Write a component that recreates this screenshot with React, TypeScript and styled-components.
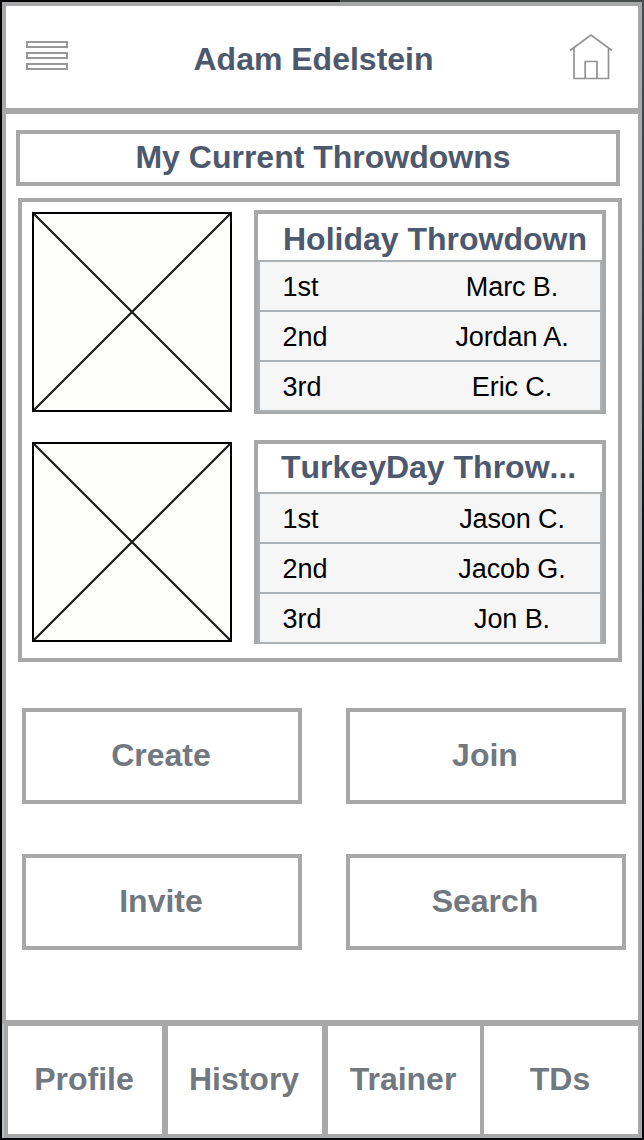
import React from "react";
import styled, { createGlobalStyle } from "styled-components";

const GREY = "#a8a8a8";
const LINE = "#abb0b4";
const NAVY = "#4d596e";
const SLATE = "#717880";

const Global = createGlobalStyle`
  * { box-sizing: border-box; }
  body { margin: 0; background: #000; font-family: "Liberation Sans", Arial, sans-serif; }
`;

const Bezel = styled.div`
  width: 644px;
  height: 1140px;
  padding: 2px;
  background:
    linear-gradient(90deg, #050608 0 340px, #4a4d4e 340px) top / 100% 2px no-repeat,
    linear-gradient(#4a4d4e, #3c3e42 240px, #101116 520px, #050608 700px) right / 2px 100% no-repeat,
    #030508;
`;

const Screen = styled.div`
  display: flex;
  flex-direction: column;
  height: 1136px;
  background: #fff;
`;

const Header = styled.header`
  display: flex;
  align-items: center;
  justify-content: space-between;
  height: 112px;
  padding: 0 25px 0 20px;
  border: 4px solid ${GREY};
  border-bottom-width: 6px;
`;

const UserName = styled.h1`
  margin: 4px 10px 0 0;
  font-size: 32px;
  line-height: 36px;
  color: ${NAVY};
`;

const MenuIcon = styled.div`
  display: flex;
  flex-direction: column;
  gap: 4px;
  margin-top: -3px;
`;

const MenuBar = styled.span`
  width: 42px;
  height: 7px;
  border: 2px solid #989898;
`;

const HomeIcon = styled.svg`
  display: block;
  width: 44px;
  height: 48px;
`;

const Main = styled.main`
  flex: 1;
  border: solid ${GREY};
  border-width: 0 4px;
  padding: 16px 12px 0 10px;
`;

const SectionTitle = styled.h2`
  width: 604px;
  height: 56px;
  margin: 0;
  border: 4px solid ${GREY};
  padding-left: 10px;
  font-size: 32px;
  line-height: 46px;
  text-align: center;
  color: ${NAVY};
`;

const Panel = styled.section`
  display: flex;
  flex-direction: column;
  gap: 26px;
  width: 604px;
  height: 464px;
  margin: 12px 0 0 2px;
  padding: 8px 10px;
  border: 4px solid ${GREY};
`;

const Entry = styled.article`
  display: flex;
  gap: 22px;
`;

const Picture = styled.svg`
  display: block;
  flex: none;
  width: 200px;
  height: 200px;
  margin-top: 2px;
`;

const Card = styled.div<{ $open: boolean }>`
  width: 352px;
  height: 204px;
  border: solid ${GREY};
  border-width: ${(p) => (p.$open ? "4px 4px 0" : "4px 4px 2px")};
`;

const CardTitle = styled.h3<{ $height: number; $shift: number }>`
  height: ${(p) => p.$height}px;
  margin: 0;
  padding-left: ${(p) => p.$shift}px;
  font-size: 32px;
  font-kerning: none;
  line-height: ${(p) => (p.$height === 46 ? 50 : 46)}px;
  white-space: nowrap;
  color: ${NAVY};
`;

const Ranking = styled.div`
  width: 344px;
  border: 2px solid ${LINE};
  border-bottom: 0;
`;

const RankRow = styled.div`
  display: grid;
  grid-template-columns: 164px 1fr;
  height: 50px;
  border-bottom: 2px solid ${LINE};
  background: #f6f6f6;
  font-size: 27px;
  line-height: 51px;
  color: #000;
`;

const Place = styled.span`
  padding-left: 22.5px;
`;

const Player = styled.span`
  text-align: center;
  letter-spacing: -0.1px;
`;

const Actions = styled.div`
  display: grid;
  grid-template-columns: 280px 280px;
  gap: 50px 44px;
  margin: 46px 0 0 6px;
`;

const Action = styled.button`
  height: 96px;
  padding: 0 2px 1px 0;
  border: 4px solid ${GREY};
  background: #fff;
  font: bold 32px "Liberation Sans", Arial, sans-serif;
  color: ${SLATE};
`;

const Nav = styled.nav`
  display: grid;
  grid-template-columns: 154px 154px 152px 152px;
  column-gap: 6px;
  height: 118px;
  padding: 6px 4px 4px 6px;
  background: linear-gradient(#b9bec8, #b9bec8) 0 4px / 2px 100% no-repeat, ${GREY};
`;

const Tab = styled.a<{ $wide?: boolean }>`
  display: flex;
  align-items: center;
  justify-content: center;
  margin-left: ${(p) => (p.$wide ? -2 : 0)}px;
  padding: 0 2px 2px 0;
  background: #fff;
  font-size: 32px;
  font-weight: bold;
  color: ${SLATE};
`;

const throwdowns = [
  { title: "Holiday Throwdown", height: 46, shift: 25, players: ["Marc B.", "Jordan A.", "Eric C."] },
  { title: "TurkeyDay Throw...", height: 48, shift: 23, players: ["Jason C.", "Jacob G.", "Jon B."] },
];
const places = ["1st", "2nd", "3rd"];

const Placeholder = () => (
  <Picture viewBox="0 0 200 200">
    <rect x="1" y="1" width="198" height="198" fill="#fefefd" stroke="#000" strokeWidth="2" />
    <path d="M2 2L198 198M198 2L2 198" stroke="#1c1c1c" strokeWidth="2.2" />
  </Picture>
);

export default function App() {
  return (
    <Bezel>
      <Global />
      <Screen>
        <Header>
          <MenuIcon>
            <MenuBar />
            <MenuBar />
            <MenuBar />
          </MenuIcon>
          <UserName>Adam Edelstein</UserName>
          <HomeIcon viewBox="0 0 44 48" fill="none" stroke="#929292" strokeWidth="1.7">
            <path d="M1 17.5L22 2L43 17.5M5 15V45.5H39.5V15M16.2 45.5V28.5H28V45.5" />
          </HomeIcon>
        </Header>
        <Main>
          <SectionTitle>My Current Throwdowns</SectionTitle>
          <Panel>
            {throwdowns.map((t, i) => (
              <Entry key={t.title}>
                <Placeholder />
                <Card $open={i === 1}>
                  <CardTitle $height={t.height} $shift={t.shift}>{t.title}</CardTitle>
                  <Ranking>
                    {t.players.map((name, n) => (
                      <RankRow key={name}>
                        <Place>{places[n]}</Place>
                        <Player>{name}</Player>
                      </RankRow>
                    ))}
                  </Ranking>
                </Card>
              </Entry>
            ))}
          </Panel>
          <Actions>
            <Action>Create</Action>
            <Action>Join</Action>
            <Action>Invite</Action>
            <Action>Search</Action>
          </Actions>
        </Main>
        <Nav>
          <Tab>Profile</Tab>
          <Tab>History</Tab>
          <Tab>Trainer</Tab>
          <Tab $wide>TDs</Tab>
        </Nav>
      </Screen>
    </Bezel>
  );
}
